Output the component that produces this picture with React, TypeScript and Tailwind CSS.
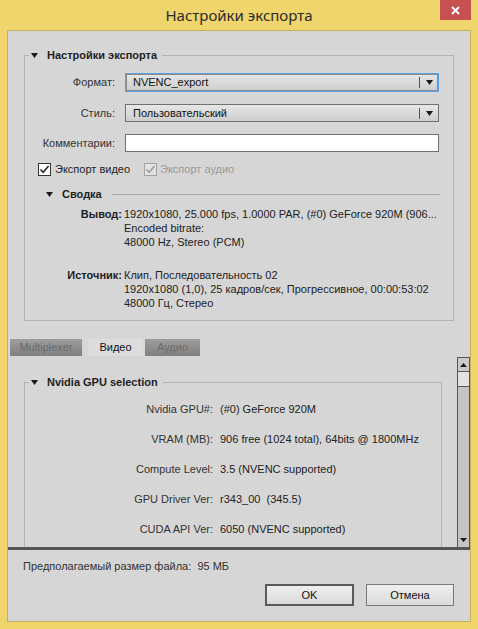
const font = { fontFamily: '"Liberation Sans", Arial, sans-serif' };

const Tri = ({ className = "" }: { className?: string }) => (
  <svg width="7" height="5" viewBox="0 0 7 5" className={className}>
    <path d="M0 0H7L3.5 5Z" fill="#1a1a1a" />
  </svg>
);

const Check = ({ disabled }: { disabled?: boolean }) => (
  <span
    className={
      disabled
        ? "flex h-[13px] w-[13px] items-center justify-center border border-[#a3a3a3] bg-[#e2e2e2]"
        : "flex h-[13px] w-[13px] items-center justify-center border border-[#333333] bg-white"
    }
  >
    <svg width="11" height="11" viewBox="0 0 11 11">
      <path
        d="M1.5 5.5 L4.2 8.3 L9.6 2"
        fill="none"
        stroke={disabled ? "#9a9a9a" : "#222222"}
        strokeWidth="1.5"
      />
    </svg>
  </span>
);

const Select = ({ value, focused }: { value: string; focused?: boolean }) => (
  <div
    className={
      focused
        ? "flex h-[19px] w-[314px] items-center border border-[#58a3e6] bg-gradient-to-b from-[#e7e7e7] to-[#cdcdcd] shadow-[inset_0_0_0_1px_#8a8a8a]"
        : "flex h-[18px] w-[314px] items-center border border-[#707070] bg-gradient-to-b from-[#e7e7e7] to-[#cdcdcd]"
    }
  >
    <span className="flex-1 pl-[7px] text-[11px] text-[#111]">{value}</span>
    <span className="h-[11px] w-px bg-[#555]" />
    <span className="flex w-[18px] justify-center">
      <Tri />
    </span>
  </div>
);

const Group = ({
  title,
  children,
  className = "",
}: {
  title: string;
  children: React.ReactNode;
  className?: string;
}) => (
  <fieldset className={`border border-[#b3b3b3] ${className}`}>
    <legend className="ml-[4px] flex h-[14px] items-center pl-[2px] pr-[5px]">
      <Tri className="mr-[9px]" />
      <span className="text-[11px] font-bold text-[#1e1e1e]">{title}</span>
    </legend>
    {children}
  </fieldset>
);

const gpuRows = [
  ["Nvidia GPU#:", "(#0) GeForce 920M"],
  ["VRAM (MB):", "906 free (1024 total), 64bits @ 1800MHz"],
  ["Compute Level:", "3.5 (NVENC supported)"],
  ["GPU Driver Ver:", "r343_00  (345.5)"],
  ["CUDA API Ver:", "6050 (NVENC supported)"],
];

export default function App() {
  return (
    <div className="flex h-[629px] w-[478px] flex-col bg-[#efd56c]" style={font}>
      {/* title bar */}
      <div className="relative flex h-[30px] items-center justify-center">
        <span
          className="text-[15px] text-[#2b2b2b]"
          style={{ fontFamily: '"Noto Sans", "Open Sans", sans-serif' }}
        >
          Настройки экспорта
        </span>
        <div className="absolute right-[7px] top-0 flex h-[20px] w-[31px] items-center justify-center bg-[#c75050]">
          <svg width="9" height="9" viewBox="0 0 9 9">
            <path d="M1 1L8 8M8 1L1 8" stroke="white" strokeWidth="2" />
          </svg>
        </div>
      </div>

      {/* client */}
      <div className="mx-[7px] mb-[7px] flex flex-1 flex-col border border-[#c4b05c] bg-[#d6d6d6] text-[11px] text-[#222]">
        <Group title="Настройки экспорта" className="mx-[16px] mt-[17px] h-[273px]">
          <div className="mt-[11px] flex items-center">
            <span className="w-[90px] text-right text-[#333]">Формат:</span>
            <span className="ml-[10px]">
              <Select value="NVENC_export" focused />
            </span>
          </div>
          <div className="mt-[12px] flex items-center">
            <span className="w-[90px] text-right text-[#333]">Стиль:</span>
            <span className="ml-[10px]">
              <Select value="Пользовательский" />
            </span>
          </div>
          <div className="mt-[12px] flex items-center">
            <span className="w-[90px] text-right text-[#333]">Комментарии:</span>
            <span className="ml-[10px] h-[18px] w-[314px] border border-[#6f6f6f] bg-white" />
          </div>
          <div className="mt-[10px] flex h-[14px] items-center pl-[13px]">
            <Check />
            <span className="ml-[4px] text-[#1e1e1e]">Экспорт видео</span>
            <span className="ml-[14px]">
              <Check disabled />
            </span>
            <span className="ml-[3px] text-[#9a9a9a]">Экспорт аудио</span>
          </div>
          <div className="mt-[11px] flex h-[14px] items-center pl-[21px]">
            <Tri />
            <span className="ml-[9px] font-bold text-[#1e1e1e]">Сводка</span>
            <span className="ml-[10px] mr-[13px] h-px flex-1 bg-[#a9a9a9]" />
          </div>
          <div className="mt-[6px] flex leading-[14px]">
            <span className="w-[97px] text-right font-bold text-[#1e1e1e]">Вывод:</span>
            <div className="ml-[2px] flex flex-col">
              <span>1920x1080, 25.000 fps, 1.0000 PAR, (#0) GeForce 920M (906...</span>
              <span>Encoded bitrate:</span>
              <span>48000 Hz, Stereo (PCM)</span>
            </div>
          </div>
          <div className="mt-[19px] flex leading-[14px]">
            <span className="w-[97px] text-right font-bold text-[#1e1e1e]">Источник:</span>
            <div className="ml-[2px] flex flex-col">
              <span>Клип, Последовательность 02</span>
              <span>1920x1080 (1,0), 25 кадров/сек, Прогрессивное, 00:00:53:02</span>
              <span>48000 Гц, Стерео</span>
            </div>
          </div>
        </Group>

        {/* tabs */}
        <div className="mt-[18px] flex h-[17px] pl-[2px]">
          <span className="flex w-[72px] items-center justify-center bg-gradient-to-b from-[#9d9d9d] to-[#808080] text-[#6b6b6b]">
            Multiplexer
          </span>
          <span className="ml-[6px] flex w-[55px] items-center justify-center bg-[#dcdcdc] text-[#111]">
            Видео
          </span>
          <span className="ml-[2px] flex w-[55px] items-center justify-center bg-gradient-to-b from-[#9d9d9d] to-[#808080] text-[#6b6b6b]">
            Аудио
          </span>
        </div>

        {/* scroll region */}
        <div className="mt-[1px] flex h-[190px] overflow-hidden">
          <div className="flex-1 overflow-hidden">
            <Group title="Nvidia GPU selection" className="ml-[16px] mr-[15px] mt-[18px] h-[220px]">
              <div className="mt-[5px] flex flex-col">
                {gpuRows.map(([label, value]) => (
                  <div key={label} className="flex h-[30px] items-center">
                    <span className="w-[188px] text-right text-[#333]">{label}</span>
                    <span className="ml-[7px] whitespace-pre text-[#222]">{value}</span>
                  </div>
                ))}
              </div>
            </Group>
          </div>
          <div className="flex w-[13px] flex-col border-x border-t border-[#555]">
            <div className="flex h-[14px] items-center justify-center border-b border-[#555] bg-[#cacaca]">
              <svg width="7" height="4" viewBox="0 0 7 4">
                <path d="M0 4H7L3.5 0Z" fill="#1a1a1a" />
              </svg>
            </div>
            <div className="h-[15px] border-b border-[#555] bg-[#e3e3e3]" />
            <div className="flex-1 bg-[#c4c4c4]" />
            <div className="flex h-[14px] items-center justify-center bg-[#c4c4c4]">
              <svg width="7" height="4" viewBox="0 0 7 4">
                <path d="M0 0H7L3.5 4Z" fill="#1a1a1a" />
              </svg>
            </div>
          </div>
        </div>
        <div className="h-[3px] bg-[#555]" />

        {/* footer */}
        <div className="mt-[9px] flex h-[14px] items-center pl-[15px] text-[#333]">
          <span className="whitespace-pre">Предполагаемый размер файла:  95 МБ</span>
        </div>
        <div className="mt-[11px] flex justify-end gap-[12px] pr-[16px]">
          <button className="flex h-[22px] w-[89px] items-center justify-center border-2 border-[#5a5a5a] bg-gradient-to-b from-[#efefef] to-[#d9d9d9] text-[11px] text-[#111]">
            OK
          </button>
          <button className="flex h-[22px] w-[88px] items-center justify-center border border-[#7a7a7a] bg-gradient-to-b from-[#efefef] to-[#d9d9d9] text-[11px] text-[#111]">
            Отмена
          </button>
        </div>
      </div>
    </div>
  );
}
